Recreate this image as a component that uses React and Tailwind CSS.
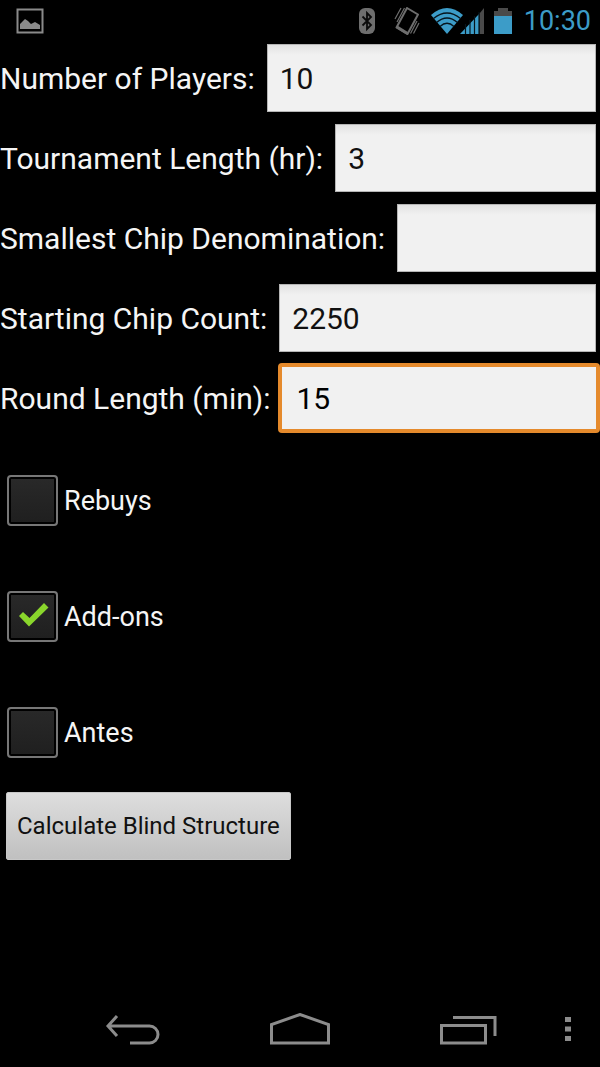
const fields = [
  { id: 'players', label: 'Number of Players:', value: '10' },
  { id: 'length', label: 'Tournament Length (hr):', value: '3' },
  { id: 'denomination', label: 'Smallest Chip Denomination:', value: '' },
  { id: 'chips', label: 'Starting Chip Count:', value: '2250' },
  { id: 'round', label: 'Round Length (min):', value: '15', active: true },
];

const options = [
  { id: 'rebuys', label: 'Rebuys', checked: false },
  { id: 'addons', label: 'Add-ons', checked: true },
  { id: 'antes', label: 'Antes', checked: false },
];

function StatusBar() {
  return (
    <header className="flex h-[38px] items-center pt-1 pl-4 pr-[9px]">
      <svg className="h-[26px] w-7" viewBox="0 0 28 26" fill="none">
        <rect x="1.5" y="1.5" width="25" height="23" stroke="#8a8a8a" strokeWidth="2" />
        <path d="M4 21v-5l3-3 2-2 3 2 3 3 4-2 5 3v4z" fill="#8a8a8a" />
      </svg>

      <div className="ml-auto flex items-center">
        {/* Bluetooth */}
        <svg className="mr-[18px] h-[26px] w-[18px]" viewBox="0 0 18 26" fill="none">
          <rect x="1" y="0" width="16" height="26" rx="6" fill="#6e6e6e" />
          <path d="M4.500 8.500L13 17l-4 4V5l4 4-8.500 8.500" stroke="#0a0a0a" strokeWidth="1.800" />
        </svg>

        {/* Vibrate */}
        <svg className="mr-[11px] h-7 w-[26px]" viewBox="0 0 26 28" fill="none" stroke="#6e6e6e">
          <path d="M13 1L24 7.500 13.500 27 2.500 20.500z" strokeWidth="2" strokeLinejoin="round" />
          <path d="M3 20l10.500 6.500" strokeWidth="3" />
          <path d="M7 1L1 12M10.500 1L3 15M23 14l-6.500 12.500M25 16l-5.500 10.500" strokeWidth="1.200" />
        </svg>

        {/* Wifi */}
        <svg className="h-[26px] w-8" viewBox="0 0 32 26">
          <path d="M0 7Q16 -7 32 7L16 26z" fill="#3c9cc8" />
          <path
            d="M2.500 10.500Q16 -.5 29.500 10.500M5.500 14.500Q16 5.500 26.500 14.500M9 18.500Q16 12 23 18.500"
            fill="none"
            stroke="#06141c"
            strokeWidth="1.300"
          />
        </svg>

        {/* Signal */}
        <svg className="mr-[10px] -ml-[3px] h-[26px] w-6" viewBox="0 0 24 26">
          <path d="M0 26L19 6v20z" fill="#3c9cc8" />
          <path d="M19.500 5.500L24 0v26h-4.500z" fill="#4a4a4a" />
          <path d="M5.500 16v10M10 12v14M14.500 8v18M19 4v22" stroke="#06141c" strokeWidth="1.200" />
        </svg>

        {/* Battery */}
        <svg className="mr-3 h-[26px] w-[18px]" viewBox="0 0 18 26">
          <path d="M4 0h10v3h4v6H0V3h4z" fill="#4a4a4a" />
          <path d="M0 8h18v18H0z" fill="#3c9cc8" />
        </svg>

        <span className="text-[27px] leading-8 text-[#3c9cc8]">10:30</span>
      </div>
    </header>
  );
}

function Field({ id, label, value, active }) {
  return (
    <div className={active ? 'flex h-20 items-center gap-2' : 'flex h-20 items-center gap-3 pr-1'}>
      <label htmlFor={id} className="shrink-0 pt-[2px] text-[30px] leading-9 text-[#f5f5f5]">
        {label}
      </label>
      <input
        id={id}
        type="text"
        inputMode="numeric"
        defaultValue={value}
        className={
          active
            ? 'h-[70px] min-w-0 flex-1 rounded-[4px] border-4 border-[#e58a2c] bg-[#f1f1f1] px-[14px] text-[30px] text-black outline-none'
            : 'h-[68px] min-w-0 flex-1 border border-[#b5b5b5] bg-[#f1f1f1] bg-linear-to-b from-[#e2e2e2] to-[#f1f1f1] to-15% px-3 text-[30px] text-[#111] outline-none'
        }
      />
    </div>
  );
}

function Option({ id, label, checked }) {
  return (
    <div className="flex h-[116px] items-center pl-[7px]">
      <div className="relative h-[51px] w-[51px]">
        <input
          id={id}
          type="checkbox"
          defaultChecked={checked}
          className="peer block h-full w-full appearance-none rounded-[4px] border-2 border-[#777] bg-linear-to-b from-[#292929] to-[#1f1f1f] shadow-[inset_0_0_0_2px_#000]"
        />
        <svg
          className="pointer-events-none absolute inset-0 hidden h-full w-full peer-checked:block"
          viewBox="0 0 51 51"
        >
          <path d="M12 25l4-4 6.500 6L37 12l4.500 4.500L22 35.500z" fill="#8ad62c" />
        </svg>
      </div>
      <label htmlFor={id} className="pt-[2px] pl-[6px] text-[27px] leading-8 text-[#f5f5f5]">
        {label}
      </label>
    </div>
  );
}

function NavBar() {
  return (
    <nav className="mt-auto flex h-[76px] items-center pl-12">
      <button type="button" aria-label="Back" className="flex flex-1 justify-center">
        <svg className="h-8 w-14" viewBox="0 0 56 32" fill="none" stroke="#8c8c8c" strokeWidth="3">
          <path d="M13 3L4 13l9 10M4 13h41.500a8.500 8.500 0 0 1 0 17H26" />
        </svg>
      </button>
      <button type="button" aria-label="Home" className="flex flex-1 justify-center">
        <svg className="h-8 w-[60px]" viewBox="0 0 60 32" fill="none" stroke="#8c8c8c" strokeWidth="3">
          <path d="M1.500 30V11.500L30 1.500l28.500 10V30z" />
        </svg>
      </button>
      <button type="button" aria-label="Recent apps" className="flex flex-1 justify-center">
        <svg className="h-8 w-[58px]" viewBox="0 0 58 32" fill="none" stroke="#8c8c8c" strokeWidth="3">
          <path d="M2.500 12.500h44V30h-44zM14 4.500h42V23" />
        </svg>
      </button>
      <button type="button" aria-label="Menu" className="flex w-12 justify-center pr-4">
        <svg className="h-6 w-[6px]" viewBox="0 0 6 24" fill="#8c8c8c">
          <path d="M0 0h6v5H0zM0 9.500h6v5H0zM0 19h6v5H0z" />
        </svg>
      </button>
    </nav>
  );
}

export default function App() {
  return (
    <div className="flex min-h-screen flex-col bg-black font-[Roboto,sans-serif]">
      <StatusBar />

      <main>
        <form onSubmit={(e) => e.preventDefault()}>
          {fields.map((field) => (
            <Field key={field.id} {...field} />
          ))}

          <div className="pt-1">
            {options.map((option) => (
              <Option key={option.id} {...option} />
            ))}
          </div>

          <button
            type="submit"
            className="mt-[2px] ml-[6px] h-[68px] rounded-[2px] border border-[#c8c8c8] bg-linear-to-b from-[#dedede] to-[#c0c0c0] px-[10px] text-2xl text-[#111]"
          >
            Calculate Blind Structure
          </button>
        </form>
      </main>

      <NavBar />
    </div>
  );
}
